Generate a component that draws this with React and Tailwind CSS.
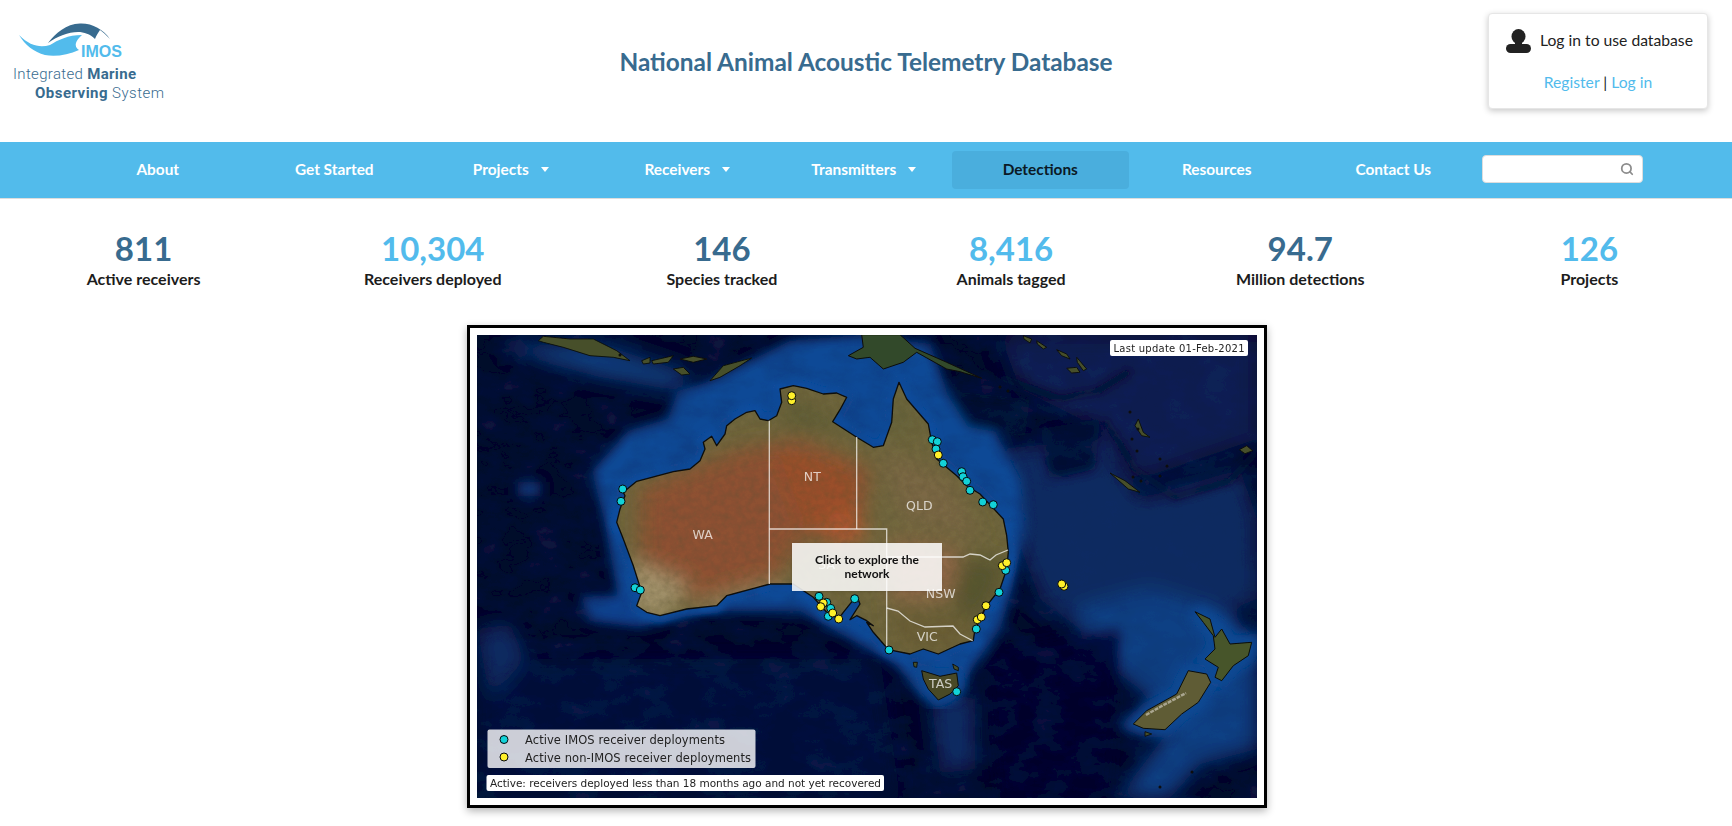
import { Search } from 'lucide-react';

const navItems = [
  { label: 'About' },
  { label: 'Get Started' },
  { label: 'Projects', menu: true },
  { label: 'Receivers', menu: true },
  { label: 'Transmitters', menu: true },
  { label: 'Detections', active: true },
  { label: 'Resources' },
  { label: 'Contact Us' },
];

const stats = [
  { value: '811', label: 'Active receivers', dark: true },
  { value: '10,304', label: 'Receivers deployed' },
  { value: '146', label: 'Species tracked', dark: true },
  { value: '8,416', label: 'Animals tagged' },
  { value: '94.7', label: 'Million detections', dark: true },
  { value: '126', label: 'Projects' },
];

// outlines were traced from 3x crops, so points are offset + value / 3
const trace = (ox, oy, list) => list.map(([x, y]) => `${(ox + x / 3).toFixed(1)},${(oy + y / 3).toFixed(1)}`).join(' ');

const australia = [
  trace(460, 320, [[490, 520], [530, 487], [575, 475], [640, 458], [690, 450], [720, 425], [735, 390], [730, 370], [755, 352], [770, 380], [795, 345], [800, 320], [825, 300], [860, 280], [885, 275], [900, 300], [925, 305], [950, 290], [965, 250], [960, 210], [1000, 200], [1040, 208], [1090, 225], [1130, 222], [1160, 235], [1140, 272], [1118, 308], [1190, 355], [1240, 385], [1270, 380], [1295, 310], [1300, 240]]),
  trace(800, 320, [[297, 190], [320, 240], [385, 315], [395, 370], [410, 420], [470, 470], [500, 500], [540, 525], [610, 600], [620, 650], [625, 700], [620, 750], [600, 810], [560, 860], [540, 900]]),
  trace(860, 600, [[378, 20], [365, 55], [345, 90], [340, 125], [300, 135], [235, 165], [190, 150], [150, 165], [100, 155], [75, 140], [40, 100], [20, 70]]),
  trace(460, 600, [[1240, 80], [1220, 65], [1190, 50], [1170, 62], [1200, 15], [1190, -10], [1150, 40], [1135, 60], [1100, 40], [1060, -5]]),
  trace(460, 320, [[1000, 795], [930, 795], [800, 830], [770, 860], [680, 870], [600, 890], [560, 880], [530, 860], [545, 820], [520, 740], [490, 660], [470, 610], [480, 570], [495, 530]]),
].join(' ');

const tasmania = trace(860, 600, [[185, 215], [240, 232], [290, 222], [295, 260], [270, 285], [235, 303], [205, 270], [190, 240]]);
const nzSouth = trace(860, 600, [[820, 375], [860, 335], [950, 285], [985, 215], [1040, 225], [1052, 250], [1015, 310], [965, 345], [915, 392], [850, 388]]);
const nzNorth = trace(860, 600, [[1005, 38], [1050, 60], [1065, 115], [1085, 90], [1110, 135], [1175, 130], [1165, 170], [1120, 200], [1085, 245], [1065, 235], [1075, 205], [1035, 180], [1065, 150], [1060, 110], [1030, 70]]);
const guinea = trace(800, 320, [[185, 47], [300, 47], [345, 88], [440, 130], [545, 178], [480, 158], [440, 150], [350, 100], [310, 130], [250, 150], [210, 115], [170, 120], [145, 110], [190, 85]]);

const islands = [
  trace(460, 320, [[235, 65], [250, 52], [330, 60], [400, 60], [470, 95], [510, 125], [460, 115], [390, 110], [310, 85], [250, 70]]),
  trace(460, 320, [[545, 125], [570, 115], [570, 132], [550, 135]]),
  trace(460, 320, [[575, 125], [640, 110], [625, 130], [580, 135]]),
  trace(460, 320, [[660, 120], [700, 112], [740, 120], [700, 130]]),
  trace(460, 320, [[640, 150], [670, 145], [690, 165], [665, 168]]),
  trace(460, 320, [[750, 185], [790, 140], [875, 117], [840, 140], [780, 175]]),
  trace(800, 320, [[930, 462], [975, 485], [1020, 520], [985, 510]]),
  trace(800, 320, [[1005, 320], [1015, 300], [1030, 340], [1050, 355], [1025, 350]]),
  trace(800, 320, [[1318, 392], [1340, 380], [1358, 395], [1335, 404]]),
  trace(800, 320, [[800, 148], [830, 145], [840, 160], [815, 162]]),
  trace(800, 320, [[770, 92], [800, 105], [810, 120], [785, 110]]),
  trace(800, 320, [[830, 115], [860, 150], [850, 155], [832, 130]]),
  trace(800, 320, [[670, 50], [695, 60], [690, 72], [672, 60]]),
  trace(800, 320, [[710, 65], [740, 85], [730, 90], [712, 75]]),
  trace(860, 600, [[855, 398], [875, 405], [855, 412]]),
  trace(860, 600, [[160, 190], [172, 190], [170, 205], [162, 203]]),
  trace(860, 600, [[278, 195], [295, 205], [295, 215], [282, 210]]),
];

const smallIslands = [
  [620, 356], [1000, 388], [1008, 392], [1137, 452], [1160, 460], [1167, 467], [1160, 477], [1133, 478], [1141, 482],
  [1132, 440], [1138, 430], [1130, 413], [1192, 773], [1160, 788],
];

const borders = [
  '769.3,421.7 769.3,585',
  '769.3,530 886.7,530 886.7,650',
  '856.7,438 856.7,530',
  '886.7,558 963,558 970,555 980,556 990,561 996,556 1008,551',
  '886.7,609 898,612 910,622 925,628 953,627 960,635 972.7,641.7',
];

const stateLabels = [
  ['WA', 702.7, 535.7], ['NT', 812.3, 477], ['QLD', 919.3, 506.7], ['SA', 826.7, 565],
  ['NSW', 940.7, 594], ['VIC', 927.3, 637.3], ['TAS', 940.7, 684],
];

const tealDots = [
  [622.7, 490], [621, 502.3], [635, 588.7], [640.3, 591], [932.3, 440.7], [937.3, 442.7], [936, 450], [943.3, 464.3], [961.7, 472.7], [963, 477.7],
  [966.7, 482.3], [970, 491.3], [982.7, 503], [993.3, 505.7], [1005.7, 571.3], [999, 593.3], [819, 597.3], [826.7, 603.3], [830.7, 609.3],
  [828.3, 617.3], [854.7, 599.7], [889, 651], [976.3, 630], [956.7, 692.7],
];

const yellowDots = [
  [791.7, 401.7], [791.7, 396.7], [938.3, 456], [1002.3, 566.7], [1006.7, 563.7], [1064, 587.3], [1061.7, 585], [823.3, 604], [820.7, 607.7],
  [832.7, 614], [838.7, 620], [986, 606.7], [977.3, 620.7], [981.3, 618],
];

function Logo() {
  return (
    <svg width="300" height="120" viewBox="0 0 300 120" className="shrink-0">
      <path d="M19 35 C30 46 40 48 50 45 C58 40 68 35 82 35 C76 40 73 46 79 50 C68 55 55 57 45 55 C34 52 25 45 19 35 Z" fill="#52bbec" />
      <path d="M48 43 C56 33 66 24 80 23.5 C92 23 103 29 110 39 C106 35 103 32 100 30 C98 33 96 36 95 39 C90 34 84 32 78 32 C68 32 58 36 48 43 Z" fill="#386b8f" />
      <text x="81" y="56.5" fontFamily="Liberation Sans, sans-serif" fontWeight="700" fontSize="16" fill="#52bbec" textLength="41">IMOS</text>
      <text x="13" y="78.5" fontFamily="Roboto, sans-serif" fontWeight="300" fontSize="15" fill="#386b8f" textLength="123">
        Integrated <tspan fontWeight="700">Marine</tspan>
      </text>
      <text x="35" y="97.5" fontFamily="Roboto, sans-serif" fontWeight="300" fontSize="15" fill="#386b8f" textLength="129">
        <tspan fontWeight="700">Observing</tspan> System
      </text>
    </svg>
  );
}

function UserIcon() {
  return (
    <svg width="25" height="24" viewBox="0 0 25 24" fill="#222222" className="shrink-0">
      <ellipse cx="12.5" cy="7.5" rx="7" ry="7.5" />
      <path d="M9 13 h7 v3 h-7 Z" />
      <rect x="0" y="15" width="25" height="9" rx="4.5" />
    </svg>
  );
}

function LoginCard() {
  return (
    <div className="justify-self-end mt-[13px] mr-[24px] w-[220px] h-[96px] bg-white border border-[#e6e6e6] rounded shadow-[0_2px_6px_rgba(0,0,0,0.22)] pt-[14px] text-[15.7px] text-[#222222]">
      <div className="flex items-center h-[25px] pl-[17px] gap-[9px] whitespace-nowrap">
        <UserIcon />
        <span>Log in to use database</span>
      </div>
      <div className="mt-[17px] text-center leading-6">
        <a className="text-[#52bbec]">Register</a> | <a className="text-[#52bbec]">Log in</a>
      </div>
    </div>
  );
}

function MapDrawing() {
  return (
    <svg viewBox="477 336 780 463" width="780" height="463" className="block">
      <defs>
        <filter id="blur12" x="-30%" y="-30%" width="160%" height="160%"><feGaussianBlur stdDeviation="10" /></filter>
        <filter id="blur6" x="-30%" y="-30%" width="160%" height="160%"><feGaussianBlur stdDeviation="6" /></filter>
        <filter id="blur3" x="-30%" y="-30%" width="160%" height="160%"><feGaussianBlur stdDeviation="3" /></filter>
        <filter id="soft"><feGaussianBlur stdDeviation="0.35" /></filter>
        <filter id="grain" x="0" y="0" width="100%" height="100%">
          <feTurbulence type="fractalNoise" baseFrequency="0.14" numOctaves="4" seed="7" />
          <feColorMatrix values="0 0 0 0 0.1  0 0 0 0 0.08  0 0 0 0 0.03  1.7 0 0 0 -0.6" />
        </filter>
        <filter id="grainSea" x="0" y="0" width="100%" height="100%">
          <feTurbulence type="fractalNoise" baseFrequency="0.03 0.05" numOctaves="4" seed="3" />
          <feColorMatrix values="0 0 0 0 0.01  0 0 0 0 0.03  0 0 0 0 0.14  2.2 0 0 0 -0.8" />
        </filter>
        <clipPath id="land"><polygon points={australia} /></clipPath>
        <clipPath id="nz"><polygon points={nzSouth} /><polygon points={nzNorth} /></clipPath>
      </defs>

      <g filter="url(#soft)">
        {/* ocean */}
        <rect x="477" y="336" width="780" height="463" fill="#02072a" />
        <g filter="url(#blur12)">
          <polygon points="1000,336 1257,336 1257,440 1140,480 1080,420 1020,390" fill="#091f50" />
          <polygon points="1000,450 1100,440 1140,500 1240,470 1257,520 1257,600 1180,630 1080,630 1040,600 1010,520" fill="#0b2c60" />
          <polygon points="1075,610 1150,590 1230,615 1257,640 1257,750 1200,765 1170,799 1118,799 1170,730 1140,690 1085,650" fill="#0d3f84" />
          <polygon points="477,660 880,660 900,799 477,799" fill="#06163f" opacity="0.75" />
          <polygon points="477,630 510,625 525,660 490,700" fill="#0a2c62" />
          <polygon points="505,345 600,345 690,375 680,392 600,378 540,362" fill="#0e3f80" />
          <polygon points="930,690 975,700 975,770 940,775" fill="#0a2c62" />
        </g>
        <g filter="url(#blur6)">
          <polygon points="592,472 628,432 668,420 678,392 705,384 790,342 860,336 930,345 948,395 995,432 1020,480 1025,530 1012,590 1000,630 975,665 955,700 925,700 895,665 850,640 800,612 700,612 640,628 618,596 604,520" fill="#0d4a96" />
          <polygon points="580,598 630,596 640,628 590,622" fill="#0d4290" />
          <polygon points="518,483 540,483 540,497 518,497" fill="#0c3c80" />
          <polygon points="945,392 1030,400 1025,438 968,428" fill="#030a2e" />
          <polygon points="1040,430 1100,420 1095,470 1050,480" fill="#040c33" />
          <polygon points="985,650 1120,630 1110,799 1000,799" fill="#02062a" opacity="0.8" />
        </g>
        <g filter="url(#blur3)" fill="none" stroke="#030a2e" strokeWidth="7" strokeOpacity="0.8">
          <polyline points="1105,420 1135,470 1175,498 1230,482 1257,452" />
          <polyline points="1000,378 1060,400 1098,392 1130,372" />
        </g>
        <polygon points={australia} fill="none" stroke="#0e4e9e" strokeWidth="14" strokeLinejoin="round" filter="url(#blur3)" />
        <rect x="477" y="336" width="780" height="463" filter="url(#grainSea)" opacity="0.3" />
        <polygon points={tasmania} fill="none" stroke="#0d4690" strokeWidth="14" filter="url(#blur6)" />
        <polygon points={nzSouth} fill="none" stroke="#0e4a94" strokeWidth="16" filter="url(#blur6)" />
        <polygon points={nzNorth} fill="none" stroke="#0e4a94" strokeWidth="16" filter="url(#blur6)" />

        {/* land */}
        <polygon points={australia} fill="#6f663c" />
        <g clipPath="url(#land)">
          <g filter="url(#blur12)">
            <polygon points="640,490 740,450 800,440 870,470 860,530 800,540 770,590 680,600 640,580" fill="#8e5131" />
            <polygon points="770,450 850,460 860,530 800,530" fill="#9a4f2b" />
            <polygon points="830,510 865,520 860,545 825,545" fill="#b0552d" />
            <polygon points="880,450 950,480 980,540 900,520" fill="#7a6844" />
            <polygon points="632,560 690,585 660,622 625,605" fill="#a3936c" />
            <polygon points="890,540 960,550 950,600 890,600" fill="#94694a" />
            <polygon points="890,610 980,620 960,650 900,650" fill="#6a5d36" />
            <polygon points="960,560 1010,560 985,620 950,610" fill="#56542f" />
            <polygon points="780,395 860,430 790,430" fill="#5f5c34" />
            <polygon points="890,380 925,430 880,440" fill="#66643a" />
            <polygon points="700,600 770,580 830,610 700,620" fill="#8b7a52" />
          </g>
          <rect x="477" y="336" width="780" height="463" filter="url(#grain)" opacity="0.35" />
        </g>
        <polygon points={australia} fill="none" stroke="#0b0d0a" strokeWidth="1.3" strokeLinejoin="round" />

        <polygon points={tasmania} fill="#4a4a28" stroke="#0b0d0a" strokeWidth="1" />
        <polygon points={guinea} fill="#33482a" stroke="#0b0d0a" strokeWidth="1" />
        <polygon points={nzSouth} fill="#5f5c34" stroke="#0b0d0a" strokeWidth="1" />
        <polygon points={nzNorth} fill="#47552a" stroke="#0b0d0a" strokeWidth="1" />
        <g clipPath="url(#nz)">
          <polyline points="1146,716 1160,708 1186,694" fill="none" stroke="#c9c5b6" strokeWidth="2.5" strokeOpacity="0.7" strokeDasharray="4 1" />
        </g>
        {islands.map((points, i) => (
          <polygon key={i} points={points} fill="#47502a" stroke="#0b0d0a" strokeWidth="0.9" />
        ))}
        {smallIslands.map(([cx, cy], i) => (
          <circle key={i} cx={cx} cy={cy} r="1.5" fill="#0b0d0a" />
        ))}

        {/* states */}
        {borders.map((points, i) => (
          <polyline key={i} points={points} fill="none" stroke="#ffffff" strokeOpacity="0.72" strokeWidth="1.3" />
        ))}
        {stateLabels.map(([name, x, y]) => (
          <text key={name} x={x} y={y + 4.5} textAnchor="middle" fontFamily="DejaVu Sans, sans-serif" fontSize="12.5" fill="#ffffff" fillOpacity="0.72">{name}</text>
        ))}
      </g>

      {tealDots.map(([cx, cy], i) => (
        <circle key={i} cx={cx} cy={cy} r="4" fill="#12d2d8" stroke="#06090c" strokeWidth="1" />
      ))}
      {yellowDots.map(([cx, cy], i) => (
        <circle key={i} cx={cx} cy={cy} r="4" fill="#fff02a" stroke="#06090c" strokeWidth="1" />
      ))}

      {/* figure labels */}
      <rect x="1110" y="341" width="138" height="16" rx="2" fill="#ffffff" />
      <text x="1113.5" y="352.5" fontFamily="DejaVu Sans, sans-serif" fontSize="10" fill="#222222" textLength="131">Last update 01-Feb-2021</text>

      <rect x="487.5" y="730.5" width="268" height="38.5" rx="2" fill="#ffffff" fillOpacity="0.8" />
      <circle cx="504" cy="740.5" r="4" fill="#12d2d8" stroke="#06090c" strokeWidth="1" />
      <circle cx="504" cy="758" r="4" fill="#fff02a" stroke="#06090c" strokeWidth="1" />
      <text x="525" y="745" fontFamily="DejaVu Sans, sans-serif" fontSize="11.5" fill="#222222" textLength="200">Active IMOS receiver deployments</text>
      <text x="525" y="762.5" fontFamily="DejaVu Sans, sans-serif" fontSize="11.5" fill="#222222" textLength="226">Active non-IMOS receiver deployments</text>

      <rect x="486.5" y="776" width="397.5" height="16" rx="2" fill="#ffffff" />
      <text x="490" y="787.5" fontFamily="DejaVu Sans, sans-serif" fontSize="10.5" fill="#222222" textLength="391">Active: receivers deployed less than 18 months ago and not yet recovered</text>
    </svg>
  );
}

export default function App() {
  return (
    <div className="min-h-[826px] bg-white [font-family:Lato,sans-serif] overflow-hidden">
      <header className="grid grid-cols-[1fr_auto_1fr] h-[142px]">
        <Logo />
        <h1 className="mt-[46px] text-[24.4px] leading-8 font-bold text-[#386b8f] whitespace-nowrap">
          National Animal Acoustic Telemetry Database
        </h1>
        <LoginCard />
      </header>

      <nav className="flex items-center h-[57px] pl-[69.5px] bg-[#52bbeb] border-b border-[#dddddd]">
        {navItems.map((item) => (
          <a
            key={item.label}
            className={`flex items-center justify-center gap-3 w-[176.5px] h-[38px] pb-[1px] rounded text-[15.4px] font-bold ${item.active ? 'bg-[#4aaedd] text-[#0b1a26]' : 'text-white'}`}
          >
            {item.label}
            {item.menu && <span className="w-0 h-0 border-x-4 border-t-[5px] border-x-transparent border-t-white" />}
          </a>
        ))}
        <div className="relative w-[161px] h-[28px] mb-[2px]">
          <input className="w-full h-full rounded bg-white border border-[#dddddd] outline-none" />
          <Search size={14} strokeWidth={3} className="absolute right-[9px] top-[7px] text-[#8c8c8c]" />
        </div>
      </nav>

      <section className="grid grid-cols-6 pt-[32px] ml-[-1px] mr-[-2px] text-center">
        {stats.map((stat) => (
          <div key={stat.label}>
            <div className={`text-[33px] leading-[34px] font-bold ${stat.dark ? 'text-[#386b8f]' : 'text-[#52bbec]'}`}>{stat.value}</div>
            <div className="mt-[3px] text-base leading-[22px] font-bold text-[#1c1c1c]">{stat.label}</div>
          </div>
        ))}
      </section>

      <div className="flex justify-center mt-[35px] pl-[2px]">
        <div className="relative w-[800px] h-[483px] border-[3px] border-black p-[7px] bg-white shadow-[0_3px_8px_rgba(0,0,0,0.3)]">
          <MapDrawing />
          <div className="absolute left-[322px] top-[215px] flex items-center justify-center w-[150px] h-[48px] bg-white/85 shadow-sm text-xs leading-[14px] font-bold text-center text-[#111111]">
            Click to explore the<br />network
          </div>
        </div>
      </div>
    </div>
  );
}
